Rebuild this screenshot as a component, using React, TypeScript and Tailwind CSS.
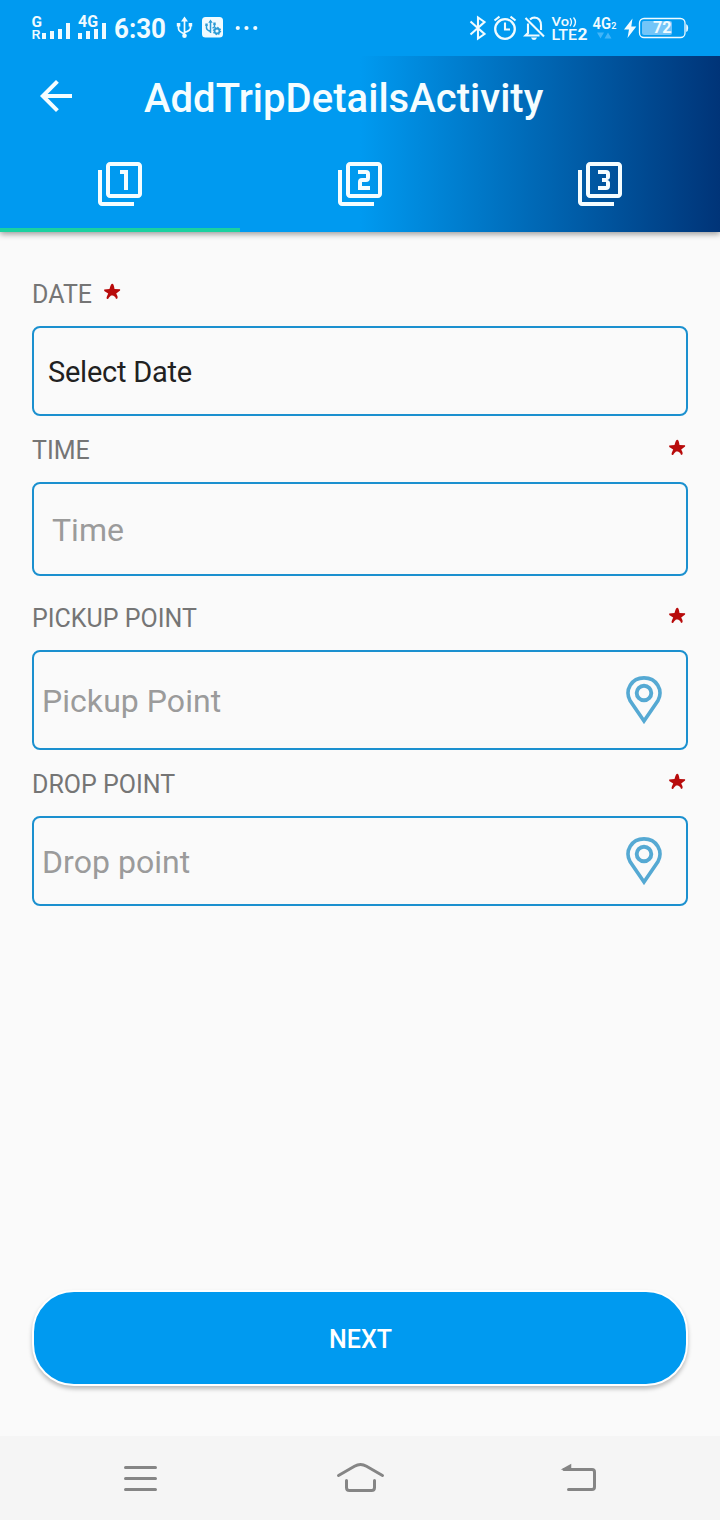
import type { ReactNode } from "react";
import { MdArrowBack, MdFilter1, MdFilter2, MdFilter3 } from "react-icons/md";

function StatusBar() {
  return (
    <header className="relative z-10 flex h-14 shrink-0 bg-[#009af0] text-[#f0fbff]">
      <svg className="h-14 w-[270px]" viewBox="0 0 270 56" fill="currentColor" fontFamily="Roboto, sans-serif" fontWeight="700">
        <text x="31.500" y="26.500" fontSize="15" textLength="10.500" lengthAdjust="spacingAndGlyphs">G</text>
        <text x="31.500" y="39" fontSize="13.500" fontWeight="500" textLength="9" lengthAdjust="spacingAndGlyphs">R</text>
        <path d="M42 33h4v6h-4zM50 31h4v8h-4zM58 29h4v10h-4zM66 23h4v16h-4z" />
        <text x="78" y="27" fontSize="16" textLength="20" lengthAdjust="spacingAndGlyphs">4G</text>
        <path d="M78 33h4v6h-4zM86 31h4v8h-4zM94 29h4v10h-4zM102 23h4v16h-4z" />
        <text x="114" y="38.300" fontSize="27" textLength="52" lengthAdjust="spacingAndGlyphs">6:30</text>
        <g fill="none" stroke="currentColor" strokeWidth="1.7">
          <path d="M184.500 20v16M178.500 25v3.500q0 3 6 5.500M190.500 25v3q0 2.500-6 4.500" />
        </g>
        <path d="M184.500 16.500l3.500 5h-7zM176.800 23h3.500v3.500h-3.500zM188.700 23h3.500v3.500h-3.500z" />
        <circle cx="184.500" cy="35.700" r="2.300" />
        <rect x="202" y="17" width="21" height="20.500" rx="3.500" />
        <g fill="none" stroke="#2c9bd5" strokeWidth="1.500">
          <path d="M210.500 21v12M206.500 25v3q0 2 4 3.500M214.500 24v2.500q0 1-2 1.500" />
          <circle cx="217" cy="31" r="2.500" strokeWidth="1.800" />
          <circle cx="217" cy="31" r="3.600" strokeWidth="1.200" strokeDasharray="1.400 1.400" />
        </g>
        <path d="M210.500 19.500l2.200 3.200h-4.400zM205.300 23.500h2.400v2.400h-2.400zM213.300 22.500h2.400v2.400h-2.400z" fill="#2c9bd5" />
        <circle cx="237.800" cy="28" r="2.100" />
        <circle cx="246.500" cy="28" r="2.100" />
        <circle cx="255.300" cy="28" r="2.100" />
      </svg>
      <svg className="ml-auto h-14 w-[260px]" viewBox="460 0 260 56" fill="currentColor" fontFamily="Roboto, sans-serif">
        <g fill="none" stroke="currentColor" strokeWidth="2.100">
          <path d="M470.500 21.500l14 12.500-6.500 4.500v-21l6.500 4.500-14 12.500" />
          <circle cx="505" cy="29" r="9.800" strokeWidth="2.300" />
          <path d="M505 22.500v7h5M494.500 20.500l5-3.800M510.500 16.700l5 3.800" />
          <path d="M530 19.500q2-2 4.500-2 6.500.5 6.500 8v4.500M528 23.500v9.500l-2.500 2.500h14M525.500 18l18.500 18.500" />
        </g>
        <path d="M531 37.500h6q-1 2.500-3 2.500t-3-2.500z" />
        <text x="551.500" y="26" fontSize="13" fontWeight="500" textLength="17.500" lengthAdjust="spacingAndGlyphs">Vo</text>
        <path d="M570 18.200q3 4 0 8M573.500 17.500q4 4.700 0 9.400" fill="none" stroke="currentColor" strokeWidth="1.300" />
        <text x="551.500" y="40" fontSize="15" fontWeight="500" textLength="25.500" lengthAdjust="spacingAndGlyphs">LTE</text>
        <text x="577.500" y="40" fontSize="16" fontWeight="700" textLength="10" lengthAdjust="spacingAndGlyphs">2</text>
        <text x="592.500" y="29" fontSize="16.500" fontWeight="600" textLength="18.500" lengthAdjust="spacingAndGlyphs">4G</text>
        <text x="611.300" y="29" fontSize="9" fontWeight="600">2</text>
        <path d="M597 32.500h7l-3.500 6zM604.500 38.500h7l-3.500-6z" fill="#42b5f8" />
        <path d="M632.500 18.500l-8.500 11h5l-1.500 8.500 8.800-11.500h-5z" />
        <rect x="639.500" y="18.500" width="45.500" height="19" rx="4.500" fill="none" stroke="currentColor" strokeWidth="1.300" />
        <rect x="642" y="21" width="30" height="14" rx="2" fill="#73c5f8" />
        <path d="M686.200 24q2 1 2 4t-2 4z" />
        <text x="653" y="33.200" fontSize="16.500" fontWeight="700" textLength="18.500" lengthAdjust="spacingAndGlyphs">72</text>
      </svg>
    </header>
  );
}

function RequiredStar() {
  return (
    <svg className="size-[18px]" viewBox="0 0 18 18" fill="#b80b0b">
      <path d="M9.300.8Q10.800.8 11.500 6l5.600.2v1.200l-3.900 3 1.300 2.800q.6 2-.7 2.800-1.200 0-1.600-2L10 12.500H8L6 14.500q-.8 2-2 1.500-1-.8 0-2.800L5.200 10.400 1.200 8V6.500L6.500 6Q7.800.8 9.300.8z" />
    </svg>
  );
}

function Pin() {
  return (
    <svg className="mr-6 h-12 w-9" viewBox="0 0 36 48" fill="none" stroke="#55a9d3" strokeWidth="3.600">
      <path d="M18 45L4 24.500C-1.500 14 5.500 1.900 18 1.900S37.500 14 32 24.500z" />
      <circle cx="18" cy="17" r="7.300" strokeWidth="3.900" />
    </svg>
  );
}

function Label({ children, inline }: { children: ReactNode; inline?: boolean }) {
  return (
    <div className={inline ? "flex h-8 items-center gap-[11px]" : "flex h-8 items-center justify-between pr-0.5"}>
      <span className="pt-0.5 text-[25px] leading-8 text-[#757575]">{children}</span>
      <span className="-mt-1">
        <RequiredStar />
      </span>
    </div>
  );
}

const box = "flex items-center justify-between rounded-lg border-2 border-[#1b90cf]";

export default function App() {
  return (
    <div className="flex h-[1520px] w-[720px] flex-col overflow-hidden bg-[#fafafa] font-['Roboto',sans-serif]">
      <StatusBar />
      <div className="relative h-44 shrink-0 bg-linear-to-r/srgb from-[#009af0] from-50% to-[#003478] text-[#f5fdff] shadow-[0_2px_6px_rgba(0,0,0,0.4)]">
        <div className="flex h-20 items-center pl-8">
          <MdArrowBack className="size-12" />
          <h1 className="mt-1.5 ml-16 text-[40px] leading-12 font-medium tracking-[0.03px]">AddTripDetailsActivity</h1>
        </div>
        <nav className="grid h-24 grid-cols-3">
          <button className="flex items-center justify-center border-b-4 border-[#1bd1a0] pt-1">
            <MdFilter1 className="size-12" />
          </button>
          <button className="flex items-center justify-center">
            <MdFilter2 className="size-12" />
          </button>
          <button className="flex items-center justify-center">
            <MdFilter3 className="size-12" />
          </button>
        </nav>
      </div>
      <main className="flex flex-1 flex-col px-8 pt-[46px]">
        <Label inline>DATE</Label>
        <div className={`${box} mt-4 h-[90px] pl-3.5 text-[29px] tracking-[-0.25px] text-[#212121]`}>
          <span className="pt-1">Select Date</span>
        </div>
        <div className="mt-[18px]">
          <Label>TIME</Label>
        </div>
        <div className={`${box} mt-4 h-[94px] pl-[18px] text-[32px] text-[#9b9b9b]`}>
          <span className="pt-0.5">Time</span>
        </div>
        <div className="mt-[26px]">
          <Label>PICKUP POINT</Label>
        </div>
        <div className={`${box} mt-4 h-[100px] pl-2 text-[32px] tracking-[0.05px] text-[#9b9b9b]`}>
          <span className="pt-0.5">Pickup Point</span>
          <Pin />
        </div>
        <div className="mt-[18px]">
          <Label>DROP POINT</Label>
        </div>
        <div className={`${box} mt-4 h-[90px] pl-2 text-[32px] tracking-[0.05px] text-[#9b9b9b]`}>
          <span className="pt-0.5">Drop point</span>
          <Pin />
        </div>
        <button className="mt-auto mb-[50px] h-24 rounded-[42px] border-2 border-white bg-[#009af0] pt-1 pl-px text-[25px] font-medium text-white shadow-[0_3px_4px_rgba(0,0,0,0.25)]">
          NEXT
        </button>
      </main>
      <footer className="flex h-[84px] shrink-0 items-center justify-between bg-[#f5f5f5] px-[120px]">
        <svg className="h-12 w-10" viewBox="120 1454 40 48" fill="none" stroke="#858585" strokeWidth="3" strokeLinecap="round">
          <path d="M125.500 1467.500h30M125.500 1478.500h30M125.500 1489.500h30" />
        </svg>
        <svg className="h-12 w-[50px]" viewBox="335 1454 50 48" fill="none" stroke="#858585" strokeWidth="3" strokeLinecap="round">
          <path d="M338.500 1475.500l16-9.300q6-3.500 12 0l16 9.300M346.500 1480.500v7q0 3 3 3h22q3 0 3-3v-7" />
        </svg>
        <svg className="h-12 w-10" viewBox="560 1454 40 48" fill="none" stroke="#858585" strokeWidth="3" strokeLinecap="round">
          <path d="M564 1469.500h28q2.500 0 2.500 2.500v15q0 2.500-2.500 2.500h-23.500" />
          <path d="M563.500 1469l7-4v4z" fill="#858585" strokeWidth="1.500" />
        </svg>
      </footer>
    </div>
  );
}
